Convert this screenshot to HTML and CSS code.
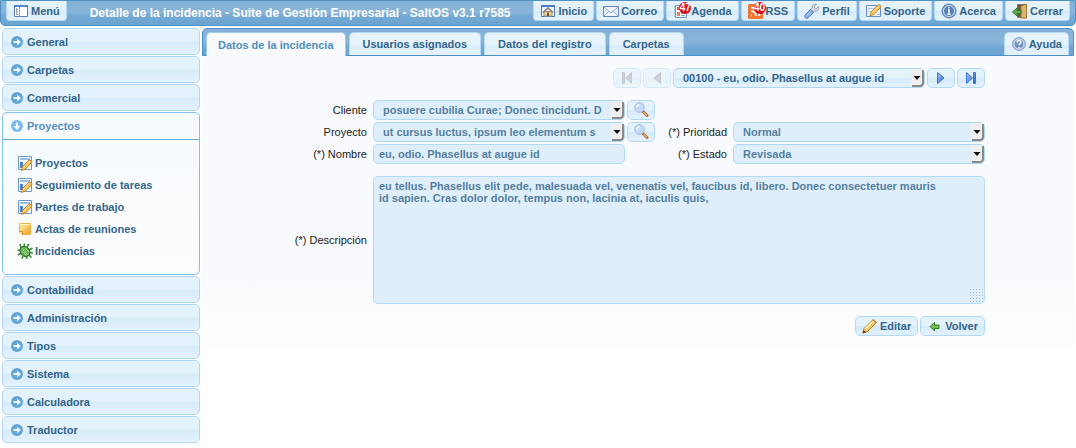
FILE: index.html
```html
<!DOCTYPE html>
<html lang="es">
<head>
<meta charset="utf-8">
<title>Detalle de la incidencia - SaltOS</title>
<link rel="stylesheet" href="styles.css">
</head>
<body>
<svg class="defs" aria-hidden="true">
  <linearGradient id="gb" x2="1" y2="1"><stop offset="0" stop-color="#b4d0fa"/><stop offset="1" stop-color="#2159c4"/></linearGradient>
  <linearGradient id="go" x2="1" y2="1"><stop offset="0" stop-color="#fff3ae"/><stop offset="1" stop-color="#f0a11c"/></linearGradient>
  <symbol id="go-right" viewBox="0 0 12 12"><circle cx="6" cy="6" r="6" fill="#62a4d8"/><path d="M2.500 5H6V2.500L10 6 6 9.500V7H2.500z" fill="#eff8fe"/></symbol>
  <symbol id="go-down" viewBox="0 0 12 12"><circle cx="6" cy="6" r="6" fill="#79bcf2"/><path d="M5 2.500V6H2.500L6 10 9.500 6H7V2.500z" fill="#fff"/></symbol>
  <symbol id="menu" viewBox="0 0 16 16"><path d="M1.500 2.500h13v11h-13z" fill="#fff" stroke="#5f80bb"/><path d="M1 2h14v2H1z" fill="#5682cf"/><path d="M6.500 4v10" stroke="#8aa6d4"/><path d="M3.500 5v7M3 6.500h2M3 9h2M3 11.500h2" stroke="#a3a3a3" fill="none"/></symbol>
  <symbol id="home" viewBox="0 0 16 16"><path d="M1.500 2.500h13v11h-13z" fill="#eef4fb" stroke="#4b76b9"/><path d="M1 2h14v2H1z" fill="#4b7cc7"/><path d="M4 8.500h8V13H4z" fill="#ead8a3" stroke="#a1906c"/><path d="M3 9.500 8 5l5 4.500" fill="none" stroke="#897b6c" stroke-width="1.600"/><path d="M7 9.500h2V13H7z" fill="#745222"/></symbol>
  <symbol id="mail" viewBox="0 0 16 16"><path d="M.5 3.500h15v10H.5z" fill="#edf4ff" stroke="#6486c0"/><path d="m1 4 7 6 7-6M1 13l5-5M15 13l-5-5" fill="none" stroke="#9caed0"/></symbol>
  <symbol id="agenda" viewBox="0 0 16 16"><path d="M2.500 2.500h11v12h-11z" fill="#fff" stroke="#7593c2"/><path d="M4 4h3v3H4z" fill="#ee5542"/><path d="M4 9h3v4H4z" fill="#f17c5b"/><path d="M8.500 10h1.500M11 10h1.500" stroke="#58ab4c" stroke-width="2"/><path d="M8.500 12.500h3" stroke="#6f96d4"/><path d="M1 4h2M1 7h2M1 10h2M1 13h2" stroke="#8b9ab4"/></symbol>
  <symbol id="rss" viewBox="0 0 16 16"><rect x="0" y="1" width="15" height="15" rx="1.500" fill="#f2762e"/><path d="M3 12.500h1M3 8a5 5 0 0 1 5 5M3 4.500A8.500 8.500 0 0 1 11.500 13" fill="none" stroke="#fff" stroke-width="2"/></symbol>
  <symbol id="wrench" viewBox="0 0 16 16"><path d="M14.500 3.500 12 6 10 4 12.500 1.200C10 .3 7.400 2.300 8.200 5L7 6.500 9.500 9l1.300-1.200c2.500.8 4.800-1.700 3.700-4.300z" fill="#d9dde1" stroke="#8b939c" stroke-width=".8"/><path d="m6.500 6.500 3 3L4 15c-2 1.500-4.500-1-3-3z" fill="#8baee6" stroke="#5b83c8"/><path d="M6.500 9 3 12.500" stroke="#c6daf6"/></symbol>
  <symbol id="pencil" viewBox="0 0 16 16"><path d="M2 10.500 10.500 2c1-1 4.500 1.500 3.500 3L5.500 13.500.8 15.200z" fill="url(#go)" stroke="#b87518" stroke-width=".9"/><path d="M3 11 11 3.500" stroke="#fffbd5" stroke-width="1.300"/><path d="m1.600 12 2.500 2.200-3.300 1z" fill="#553716"/><path d="m10.500 2 3.500 3" stroke="#ce8d56"/></symbol>
  <symbol id="edit" viewBox="0 0 16 16"><path d="M1.500 1.500h13v13h-13z" fill="#f2f7fe" stroke="#6f97d0"/><path d="M3 4h10" stroke="#9dbce8" stroke-width="2"/><path d="M3 7h3v6H3z" fill="#4d80d0"/><path d="M5.500 11.500 12 5.200c1-.8 3.500 1.200 2.700 2.300L8.500 14l-4 1.500z" fill="url(#go)" stroke="#b67a22" stroke-width=".9"/></symbol>
  <symbol id="support" viewBox="0 0 16 16"><path d="M.5 2.500h14v11H.5z" fill="#e8f2ff" stroke="#668fcd"/><path d="M2 5.500h7M2 8.500h4M11 11.500h3" stroke="#a9c2e8"/><path d="M5 9 12 2c1-1 3.500 1.200 2.700 2.300L8 11.500 4 13z" fill="url(#go)" stroke="#bd852b" stroke-width=".9"/></symbol>
  <symbol id="info" viewBox="0 0 16 16"><circle cx="8" cy="8" r="7" fill="#7699cc" stroke="#5b7fb8"/><circle cx="8" cy="8" r="5.500" fill="#587fbb" stroke="#d8e4f5"/><path d="M8 4v1.500M7 7h1v4M6.500 11.300h3" fill="none" stroke="#fff" stroke-width="1.400"/></symbol>
  <symbol id="help" viewBox="0 0 16 16"><circle cx="8" cy="8" r="6.500" fill="#9cb5dc" stroke="#8fa8d0"/><circle cx="8" cy="8" r="5" fill="#6f91c8" stroke="#dce7f7"/><path d="M6 6.500C6 4 10 4 10 6.300c0 1.300-2 1.500-2 3M8 11v1.300" fill="none" stroke="#fff" stroke-width="1.500"/></symbol>
  <symbol id="exit" viewBox="0 0 16 16"><path d="M5.500 1.500h8v13h-8z" fill="#6d5940" stroke="#817155"/><path d="m9 3 5.500-2v14L9 15z" fill="#dfb36a" stroke="#9e7437"/><path d="M.5 9 5 5v2.500h4v3H5V13z" fill="#63af50" stroke="#2e782d"/></symbol>
  <symbol id="note" viewBox="0 0 16 16"><path d="M2.500 2.500h11v11H5l-2.500-2.500z" fill="url(#go)" stroke="#eeb04a"/><path d="M2.500 10.500h3v3" fill="#fff3c0" stroke="#d78b22"/><path d="M3 3.500h10" stroke="#fff6c5"/></symbol>
  <symbol id="bug" viewBox="0 0 16 16"><path d="M4 5 3 1M7 4 7.500.5M10 4l2-3M12 7l3.500-2M13 9.500l3 .5M12 12l2.500 2.500M9 13l1 3M6 13l-1 2.500M4 10l-3 2M3.500 7.500.5 7" stroke="#3f8c32" stroke-width="1.600"/><ellipse cx="8" cy="8.500" rx="4.500" ry="5.500" transform="rotate(-45 8 8.500)" fill="#67b554" stroke="#2b6c26"/><path d="m5 5.500 6 6.500M5.500 8.500l3.500 3.500M8.500 5.500 12 9" stroke="#a5d28c"/></symbol>
  <symbol id="search" viewBox="0 0 16 16"><path d="m10 9.500 4 4" stroke="#a87045" stroke-width="3" stroke-linecap="round"/><path d="m10.500 10 3.500 3.500" stroke="#e8ad6b" stroke-width="1.500"/><circle cx="6.500" cy="5.500" r="4.800" fill="#c3daf8" stroke="#9fb8dd"/><path d="M3.500 5.500a3 3 0 0 1 3-2.800" fill="none" stroke="#f3f9ff" stroke-width="1.500"/></symbol>
  <symbol id="next" viewBox="0 0 16 16"><path d="M4.500 2.500 11 8l-6.500 5.500z" fill="url(#gb)" stroke="#3d74dc"/></symbol>
  <symbol id="last" viewBox="0 0 16 16"><path d="M3.500 2.500 9.500 8l-6 5.500zM10.500 2.500h2v11h-2z" fill="url(#gb)" stroke="#3d74dc"/></symbol>
  <symbol id="prev" viewBox="0 0 16 16"><path d="M11.500 2.500 5 8l6.500 5.500z" fill="#a5acb1" stroke="#8e969d"/></symbol>
  <symbol id="first" viewBox="0 0 16 16"><path d="M12.500 2.500 6.500 8l6 5.500zM3.500 2.500h2v11h-2z" fill="#a5acb1" stroke="#8e969d"/></symbol>
  <symbol id="back" viewBox="0 0 16 16"><path d="M3 8.500 7.500 4.500V7H12v3.500H7.500V13z" fill="#76bd4c" stroke="#337e20" stroke-linejoin="round"/></symbol>
  <symbol id="arrow" viewBox="0 0 13 18"><path d="M0 0h13v18H0z" fill="#efefef"/><path d="M11 1h2v13q0 4-4 4H1v-2h8q2 0 2-2z" fill="#8a8a8a"/><path d="M2.500 7h7L6 11z" fill="#111"/></symbol>
</svg>

<header class="topbar">
  <button class="btn drop"><svg class="ico"><use href="#menu"/></svg>Menú</button>
  <h1 class="title">Detalle de la incidencia - Suite de Gestión Empresarial - SaltOS v3.1 r7585</h1>
  <nav class="tools">
    <button class="btn drop"><svg class="ico"><use href="#home"/></svg>Inicio</button>
    <button class="btn drop"><svg class="ico"><use href="#mail"/></svg>Correo</button>
    <button class="btn drop"><svg class="ico"><use href="#agenda"/></svg><span class="badge">47</span>Agenda</button>
    <button class="btn drop"><svg class="ico"><use href="#rss"/></svg><span class="badge">40</span>RSS</button>
    <button class="btn drop"><svg class="ico"><use href="#wrench"/></svg>Perfil</button>
    <button class="btn drop"><svg class="ico"><use href="#support"/></svg>Soporte</button>
    <button class="btn drop"><svg class="ico"><use href="#info"/></svg>Acerca</button>
    <button class="btn drop"><svg class="ico"><use href="#exit"/></svg>Cerrar</button>
  </nav>
</header>

<div class="page">
  <aside class="side">
    <button class="fold"><svg class="dot"><use href="#go-right"/></svg>General</button>
    <button class="fold"><svg class="dot"><use href="#go-right"/></svg>Carpetas</button>
    <button class="fold"><svg class="dot"><use href="#go-right"/></svg>Comercial</button>
    <section class="open">
      <button class="fold current"><svg class="dot"><use href="#go-down"/></svg>Proyectos</button>
      <nav class="links">
        <a href="#"><svg class="ico"><use href="#edit"/></svg>Proyectos</a>
        <a href="#"><svg class="ico"><use href="#edit"/></svg>Seguimiento de tareas</a>
        <a href="#"><svg class="ico"><use href="#edit"/></svg>Partes de trabajo</a>
        <a href="#"><svg class="ico"><use href="#note"/></svg>Actas de reuniones</a>
        <a href="#"><svg class="ico"><use href="#bug"/></svg>Incidencias</a>
      </nav>
    </section>
    <button class="fold"><svg class="dot"><use href="#go-right"/></svg>Contabilidad</button>
    <button class="fold"><svg class="dot"><use href="#go-right"/></svg>Administración</button>
    <button class="fold"><svg class="dot"><use href="#go-right"/></svg>Tipos</button>
    <button class="fold"><svg class="dot"><use href="#go-right"/></svg>Sistema</button>
    <button class="fold"><svg class="dot"><use href="#go-right"/></svg>Calculadora</button>
    <button class="fold"><svg class="dot"><use href="#go-right"/></svg>Traductor</button>
  </aside>

  <main class="main">
    <div class="tabs">
      <button class="tab active">Datos de la incidencia</button>
      <button class="tab">Usuarios asignados</button>
      <button class="tab">Datos del registro</button>
      <button class="tab">Carpetas</button>
      <button class="tab help"><svg class="ico"><use href="#help"/></svg>Ayuda</button>
    </div>
    <form class="form">
      <div class="pager">
        <button type="button" class="btn icon" disabled aria-label="Primero"><svg class="ico"><use href="#first"/></svg></button>
        <button type="button" class="btn icon" disabled aria-label="Anterior"><svg class="ico"><use href="#prev"/></svg></button>
        <span class="pick"><select aria-label="Registro"><option>00100 - eu, odio. Phasellus at augue id</option></select><svg class="arrow"><use href="#arrow"/></svg></span>
        <button type="button" class="btn icon" aria-label="Siguiente"><svg class="ico"><use href="#next"/></svg></button>
        <button type="button" class="btn icon" aria-label="Último"><svg class="ico"><use href="#last"/></svg></button>
      </div>
      <div class="fields">
        <label class="left" for="cliente">Cliente</label>
        <span class="pick"><select id="cliente" disabled><option>posuere cubilia Curae; Donec tincidunt. D</option></select><svg class="arrow"><use href="#arrow"/></svg></span>
        <button type="button" class="btn icon" aria-label="Buscar cliente"><svg class="ico"><use href="#search"/></svg></button>
        <label class="left" for="proyecto">Proyecto</label>
        <span class="pick"><select id="proyecto" disabled><option>ut cursus luctus, ipsum leo elementum s</option></select><svg class="arrow"><use href="#arrow"/></svg></span>
        <button type="button" class="btn icon" aria-label="Buscar proyecto"><svg class="ico"><use href="#search"/></svg></button>
        <label class="right" for="prioridad">(*) Prioridad</label>
        <span class="pick"><select id="prioridad" disabled><option>Normal</option></select><svg class="arrow"><use href="#arrow"/></svg></span>
        <label class="left" for="nombre">(*) Nombre</label>
        <input class="box" id="nombre" type="text" value="eu, odio. Phasellus at augue id" readonly>
        <label class="right" for="estado">(*) Estado</label>
        <span class="pick"><select id="estado" disabled><option>Revisada</option></select><svg class="arrow"><use href="#arrow"/></svg></span>
        <label class="left" for="descripcion">(*) Descripción</label>
        <textarea class="box" id="descripcion" rows="9" readonly>eu tellus. Phasellus elit pede, malesuada vel, venenatis vel, faucibus id, libero. Donec consectetuer mauris id sapien. Cras dolor dolor, tempus non, lacinia at, iaculis quis,</textarea>
      </div>
      <div class="actions">
        <button type="button" class="btn"><svg class="ico"><use href="#pencil"/></svg>Editar</button>
        <button type="button" class="btn"><svg class="ico"><use href="#back"/></svg>Volver</button>
      </div>
    </form>
  </main>
</div>
</body>
</html>
```

FILE: styles.css
```css
* { box-sizing: border-box; }
body { margin: 0; background: #fff; font: 11px/14px "Liberation Sans", Arial, sans-serif; color: #222; }
button, select, input, textarea { margin: 0; font: bold 11px/14px "Liberation Sans", Arial, sans-serif; color: #34658a; }
.defs { position: absolute; width: 0; height: 0; }
.ico { width: 16px; height: 16px; flex: none; }

.topbar { display: flex; align-items: flex-start; height: 26px; padding: 0 5px; border: 1px solid #4f91c4; border-radius: 0 0 5px 5px; background: linear-gradient(#84b1d7, #88b4d9 48%, #74a9d4 62%, #6ba4d1); }
.title { flex: 1; margin: 0; padding-top: 5px; text-align: center; font-size: 12px; line-height: 14px; color: #fff; white-space: nowrap; }
.tools { display: flex; gap: 2px; }

.btn { position: relative; display: flex; align-items: center; justify-content: center; gap: 2px; height: 20px; padding: 0 6px; border: 1px solid #b0d8fa; border-radius: 5px; background: linear-gradient(#e4f2fc 50%, #d6eafa 52%, #e4f2fd); white-space: nowrap; }
.btn.drop { border-top: 0; border-radius: 0 0 4px 4px; }
.btn.icon { width: 28px; padding: 0; }
.btn:disabled { opacity: .5; }
.badge { position: absolute; left: 12px; top: 1px; width: 12px; height: 12px; border-radius: 6px; background: #d9101b; color: #fff; font-size: 10px; line-height: 12px; text-align: center; }

.page { display: flex; align-items: flex-start; gap: 2px; padding: 2px 2px 0; }
.side { display: flex; flex-direction: column; gap: 1px; flex: none; width: 198px; }
.fold { display: flex; align-items: center; gap: 4px; width: 100%; height: 27px; padding: 0 8px; border: 1px solid #aed7f8; border-radius: 5px; background: linear-gradient(#e4f2fc 48%, #d7ebfa 54%, #e4f2fd); text-align: left; }
.dot { width: 12px; height: 12px; flex: none; }
.open { height: 163px; border: 1px solid #83c0f0; border-radius: 5px; background: linear-gradient(#f6fafe, #fcfdfd); }
.fold.current { border: 0; border-bottom: 1px solid #6ba6d3; border-radius: 5px 5px 0 0; background: #f7fbff; color: #548fbe; }
.links { display: flex; flex-direction: column; gap: 6px; padding: 15px 14px; }
.links a { display: flex; align-items: center; gap: 2px; height: 16px; font-weight: bold; color: #34658a; text-decoration: none; }

.main { flex: 1; min-width: 0; padding-bottom: 12px; border-radius: 5px; background: linear-gradient(#f8fafd, #f8fafd 80%, #fcfdfd 90%); }
.tabs { display: flex; align-items: flex-end; gap: 3px; height: 28px; padding: 0 4px 0 3px; border: 1px solid #4f91c4; border-radius: 5px 5px 0 0; background: linear-gradient(#84b1d7, #88b4d9 50%, #74a9d4 66%, #6ba4d1); }
.tab { height: 23px; padding: 0 13px; border: 1px solid #b4dafa; border-bottom: 0; border-radius: 5px 5px 0 0; background: linear-gradient(#e6f3fc 50%, #dceefb 60%, #e4f2fd); white-space: nowrap; }
.tab.active { height: 24px; margin-bottom: -1px; padding: 0 11px; border-color: #a0cef2; background: #f8fafd; color: #4f8fc0; }
.tab.help { display: flex; align-items: center; gap: 2px; margin-left: auto; padding: 0 6px; }

.form { display: flex; flex-direction: column; gap: 12px; width: 694px; max-width: 100%; margin: 12px auto 0; }
.pager { display: flex; justify-content: flex-end; gap: 2px; }
.pager .pick { width: 252px; }
.pick { position: relative; display: block; height: 20px; }
.arrow { position: absolute; top: 1px; right: 1px; width: 13px; height: 18px; pointer-events: none; }
.pick select { appearance: none; width: 100%; height: 20px; padding: 0 18px 0 9px; border: 1px solid #aed7f8; border-radius: 5px; background: #deeffb; opacity: 1; }
.pick select:disabled, .box { color: #567f9f; }
.pager .pick select { background: linear-gradient(#e4f2fc 50%, #d6eafa 52%, #e4f2fd); }
.box { width: 100%; padding: 0 5px; border: 1px solid #b4dafa; border-radius: 5px; background: #deeffb; }
.fields { display: grid; grid-template-columns: 76px 6px minmax(0, 252px) 2px 28px 72px 6px minmax(0, 252px); row-gap: 2px; align-items: center; }
.fields label { text-align: right; white-space: nowrap; }
.fields .left { grid-column: 1; }
.fields .left + * { grid-column: 3; }
.fields .icon { grid-column: 5; }
.fields .right { grid-column: 6; }
.fields .right + * { grid-column: 8; }
input.box { height: 20px; }
.fields textarea.box { display: block; grid-column: 3 / -1; height: 128px; padding: 3px 36px 3px 5px; line-height: 12px; }
textarea::-webkit-resizer { background: radial-gradient(circle, #a9b4bc 1px, transparent 1px) 0 0 / 3px 3px; clip-path: polygon(100% 0, 100% 100%, 0 100%); }
.fields textarea, .fields label[for="descripcion"] { margin-top: 10px; }
.actions { display: flex; justify-content: flex-end; gap: 2px; }
```
